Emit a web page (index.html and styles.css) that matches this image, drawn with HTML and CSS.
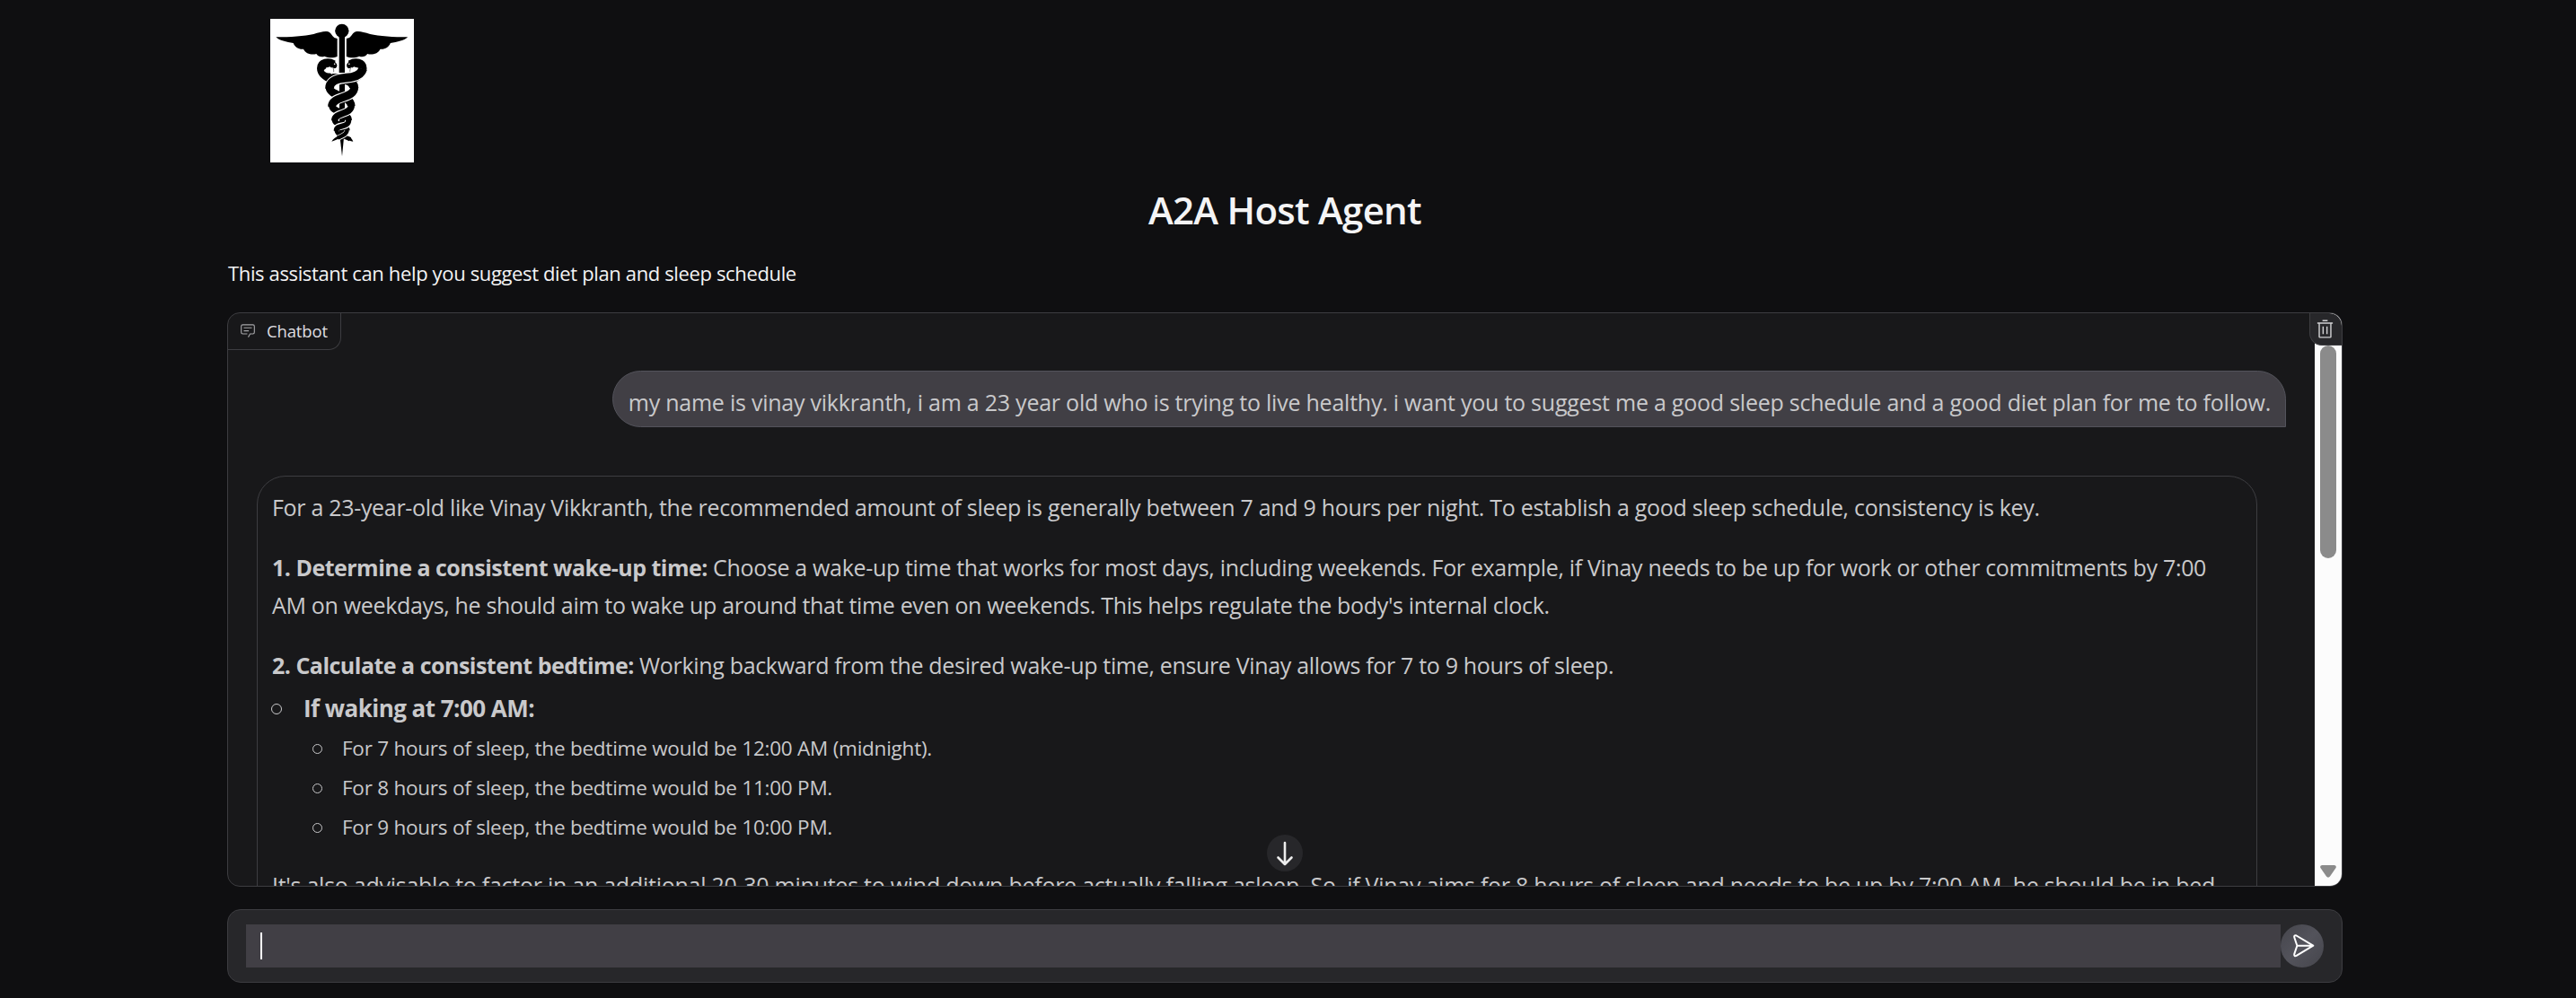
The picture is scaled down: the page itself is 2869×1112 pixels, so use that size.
FILE: index.html
```html
<!DOCTYPE html>
<html lang="en">
<head>
<meta charset="utf-8">
<title>A2A Host Agent</title>
<link rel="stylesheet" href="styles.css">
</head>
<body>
<main class="app">
  <div class="logo">
    <svg viewBox="33 33 480 480" width="160" height="160" fill="none">
      <g fill="#000">
        <g id="wing">
          <path d="M52 94C100 94 148 91 178 84C198 78 214 73 226 76C236 79 239 90 247 96L257 99V159C246 164 229 165 214 158C204 162 193 159 187 150C172 155 150 149 144 134C130 136 115 128 110 114C88 111 62 105 52 94Z"/>
        </g>
        <use href="#wing" transform="matrix(-1 0 0 1 544.500 0)"/>
        <circle cx="272.500" cy="73" r="23"/>
        <path d="M263 88H282V213H263Z"/>
        <path d="M264 245H282V425H264Z"/>
        <path d="M266 430H279L273 492Z"/>
      </g>
      <g id="head">
        <path d="M244 186C226 176 204 180 204 198C204 216 222 226 240 236" stroke="#000" stroke-width="30"/>
        <path d="M226 171C240 170 254 177 256 187C257 195 252 200 246 198C240 194 232 194 226 198Z" fill="#000"/>
        <path d="M232 193C224 196 214 201 212 206C218 214 228 216 241 214V199" fill="#fff"/>
        <circle cx="248" cy="184" r="2.500" fill="#fff"/>
        <path d="M243 197L245 204V211" stroke="#000" stroke-width="1.500"/>
      </g>
      <use href="#head" transform="matrix(-1 0 0 1 544.500 0)"/>
      <g stroke="#000">
        <path d="M240 231C285 232 313 240 313 266" stroke-width="30"/>
        <path d="M231 262C231 292 304 288 304 326" stroke-width="26"/>
        <path d="M239 322C239 347 295 342 295 374" stroke-width="22"/>
        <path d="M248 369C248 392 290 384 290 407" stroke-width="18"/>
        <path d="M254 403C254 423 280 424 300 436" stroke-width="14"/>
      </g>
      <path d="M296 427C303 431 307 436 310 443C300 442 289 438 283 430Z" fill="#000"/>
      <g stroke="#fff">
        <path d="M342 202C336 222 312 228 288 230C252 233 233 242 232 264" stroke-width="36"/>
        <path d="M314 264C314 301 239 290 239 324" stroke-width="33"/>
        <path d="M304 324C304 354 248 344 248 371" stroke-width="28"/>
        <path d="M295 372C295 400 254 384 254 405" stroke-width="24"/>
        <path d="M290 405C290 422 268 426 248 436" stroke-width="18"/>
      </g>
      <g stroke="#000">
        <path d="M342 200C336 222 312 228 288 230C252 233 231 242 231 266" stroke-width="29"/>
        <path d="M314 262C314 301 239 290 239 326" stroke-width="27"/>
        <path d="M304 322C304 354 248 344 248 373" stroke-width="22"/>
        <path d="M295 370C295 400 254 384 254 407" stroke-width="18"/>
        <path d="M290 403C290 420 272 424 258 431" stroke-width="13"/>
      </g>
      <path d="M238 443C243 434 253 428 264 423L268 431C258 434 249 440 238 443Z" fill="#000"/>
    </svg>
  </div>
  <h1 class="title">A2A Host Agent</h1>
  <p class="description">This assistant can help you suggest diet plan and sleep schedule</p>

  <section class="chat">
    <div class="messages">
      <div class="bubble user">my name is vinay vikkranth, i am a 23 year old who is trying to live healthy. i want you to suggest me a good sleep schedule and a good diet plan for me to follow.</div>
      <div class="bubble bot">
        <p class="intro">For a 23-year-old like Vinay Vikkranth, the recommended amount of sleep is generally between 7 and 9 hours per night. To establish a good sleep schedule, consistency is key.</p>
        <p><strong>1. Determine a consistent wake-up time:</strong> Choose a wake-up time that works for most days, including weekends. For example, if Vinay needs to be up for work or other commitments by 7:00<br>AM on weekdays, he should aim to wake up around that time even on weekends. This helps regulate the body's internal clock.</p>
        <p class="lead-in"><strong>2. Calculate a consistent bedtime:</strong> Working backward from the desired wake-up time, ensure Vinay allows for 7 to 9 hours of sleep.</p>
        <ul class="list">
          <li><strong class="item-title">If waking at 7:00 AM:</strong>
            <ul class="sublist">
              <li>For 7 hours of sleep, the bedtime would be 12:00 AM (midnight).</li>
              <li>For 8 hours of sleep, the bedtime would be 11:00 PM.</li>
              <li>For 9 hours of sleep, the bedtime would be 10:00 PM.</li>
            </ul>
          </li>
        </ul>
        <p class="closing">It's also advisable to factor in an additional 20-30 minutes to wind down before actually falling asleep. So, if Vinay aims for 8 hours of sleep and needs to be up by 7:00 AM, he should be in bed</p>
      </div>
    </div>
    <div class="scrollbar">
      <div class="thumb"></div>
      <svg class="arrow" width="18" height="14" viewBox="0 0 18 14"><path d="M2.500 0H15.500C17.500 0 18.500 1.800 17.400 3.300L11 12.500C10 14 8 14 7 12.500L.6 3.300C-.5 1.800 .5 0 2.500 0Z" fill="#8b8b8b"/></svg>
    </div>
    <div class="label">
      <svg width="18" height="18" viewBox="0 0 32 32" fill="#a5a5a8"><path d="M17.740 30L16 29l4-7h6a2 2 0 0 0 2-2V8a2 2 0 0 0-2-2H6a2 2 0 0 0-2 2v12a2 2 0 0 0 2 2h9v2H6a4 4 0 0 1-4-4V8a4 4 0 0 1 4-4h20a4 4 0 0 1 4 4v12a4 4 0 0 1-4 4h-4.840Z"/><path d="M8 10h16v2H8zM8 16h10v2H8z"/></svg>
      <span>Chatbot</span>
    </div>
    <button class="clear" aria-label="Clear">
      <svg width="23" height="23" viewBox="0 0 32 32" fill="#d0d0d2"><path d="M12 12h2v12h-2zM18 12h2v12h-2zM4 6v2h2v20a2 2 0 0 0 2 2h16a2 2 0 0 0 2-2V8h2V6zm4 22V8h16v20zM12 2h8v2h-8z"/></svg>
    </button>
    <button class="to-bottom" aria-label="Scroll to bottom">
      <svg width="20" height="28" viewBox="0 0 20 28" fill="none" stroke="#ececec" stroke-width="2.600" stroke-linecap="round" stroke-linejoin="round"><path d="M10 2V26M2.500 18.500L10 26L17.500 18.500"/></svg>
    </button>
  </section>

  <form class="composer">
    <div class="field"><span class="caret"></span></div>
    <button class="send" type="button" aria-label="Send">
      <svg width="26" height="28" viewBox="0 0 26 28" fill="none" stroke="#fff" stroke-width="2" stroke-linejoin="round" stroke-linecap="round"><path d="M2.300 4.500C1.700 2.700 3 1.700 4.600 2.500L23.300 13.700L4.600 24.900C3 25.700 1.700 24.700 2.300 22.900L5.400 13.700ZM5.400 13.700H22"/></svg>
    </button>
  </form>
</main>
</body>
</html>
```
FILE: styles.css
```css
* {
  box-sizing: border-box;
}

body {
  margin: 0;
  height: 1112px;
  overflow: hidden;
  background: #0f0f11;
  font-family: "Open Sans", "Noto Sans", sans-serif;
}

button {
  padding: 0;
  border: 0;
}

svg {
  display: block;
}

.app {
  width: 2356px;
  margin-left: 253px;
  padding-top: 21px;
}

.logo {
  width: 160px;
  height: 160px;
  margin-left: 48px;
  background: #fff;
}

.title {
  height: 56px;
  margin: 25px 0 0;
  color: #f4f4f5;
  font-size: 42px;
  font-weight: 600;
  line-height: 56px;
  letter-spacing: -0.73px;
  text-align: center;
}

.description {
  height: 30px;
  margin: 27px 0 29px;
  padding-left: 1px;
  color: #f4f4f5;
  font-size: 22px;
  line-height: 30px;
  letter-spacing: -0.36px;
}

.chat {
  position: relative;
  display: flex;
  height: 640px;
  overflow: hidden;
  background: #18181a;
  border: 1px solid #3d3d41;
  border-radius: 14px;
}

.messages {
  flex: 1;
  display: flex;
  flex-direction: column;
  padding: 64px 32px 0;
  color: #c9c9cb;
  font-size: 25px;
  line-height: 42.300px;
  letter-spacing: -0.33px;
  white-space: nowrap;
}

.bubble {
  flex: none;
  border: 1px solid #3d3d41;
}

.user {
  align-self: flex-end;
  height: 63px;
  padding: 13px 16px 0 17px;
  background: #413f45;
  border-color: #53535b;
  border-radius: 32px 32px 0 32px;
  letter-spacing: -0.236px;
}

.bot {
  width: 2228px;
  height: 520px;
  margin-top: 54px;
  padding: 13px 16px 0;
  border-radius: 32px 32px 0 0;
}

.bot p {
  margin: 0 0 24.600px;
}

.bot p.intro {
  letter-spacing: -0.31px;
}

.bot p.lead-in {
  margin-bottom: 6px;
}

.bot p.closing {
  margin-top: 21px;
  letter-spacing: -0.26px;
}

strong {
  font-weight: 700;
  letter-spacing: -0.51px;
}

ul {
  margin: 0;
  padding: 0;
  list-style: none;
}

.list > li {
  position: relative;
  padding-left: 35px;
}

.item-title {
  display: block;
  font-size: 26px;
  letter-spacing: -0.54px;
}

.list > li::before,
.sublist li::before {
  content: "";
  position: absolute;
  border: 1px solid #c9c9cb;
  border-radius: 50%;
}

.list > li::before {
  left: -1px;
  top: 16px;
  width: 10px;
  height: 10px;
}

.sublist {
  padding-top: 1px;
}

.sublist li {
  position: relative;
  padding-left: 43px;
  font-size: 22.500px;
  line-height: 44px;
  letter-spacing: -0.24px;
}

.sublist li::before {
  left: 10px;
  top: 17px;
  width: 9px;
  height: 9px;
}

.scrollbar {
  flex: none;
  display: flex;
  flex-direction: column;
  justify-content: space-between;
  align-items: center;
  width: 30px;
  padding: 36px 0 9px;
  background: #fcfcfc;
}

.thumb {
  width: 18px;
  height: 237px;
  background: #8b8b8b;
  border-radius: 9px;
}

.label {
  position: absolute;
  left: 0;
  top: 0;
  display: flex;
  align-items: center;
  gap: 12px;
  width: 126px;
  height: 41px;
  padding: 0 0 2px 13px;
  border: solid #3d3d41;
  border-width: 0 1px 1px 0;
  border-radius: 0 0 14px 0;
  color: #dfdfe1;
  font-size: 18.500px;
  letter-spacing: -0.14px;
}

.clear {
  position: absolute;
  right: 0;
  top: 0;
  display: grid;
  place-items: center;
  width: 36px;
  height: 36px;
  padding-right: 2px;
  background: #27272a;
  border: solid #3d3d41;
  border-width: 0 0 1px 1px;
  border-radius: 0 14px 0 14px;
}

.to-bottom {
  position: absolute;
  left: 1157px;
  bottom: 16px;
  display: grid;
  place-items: center;
  width: 40px;
  height: 41px;
  background: #27272a;
  border-radius: 50%;
}

.composer {
  display: flex;
  align-items: center;
  height: 82px;
  margin-top: 25px;
  padding: 0 20px;
  background: #27272a;
  border: 1px solid #3d3d41;
  border-radius: 15px;
}

.field {
  flex: 1;
  display: flex;
  align-items: center;
  height: 48px;
  padding-left: 16px;
  background: #413f45;
}

.caret {
  width: 2px;
  height: 30px;
  background: #fff;
}

.send {
  display: grid;
  place-items: center;
  width: 48px;
  height: 48px;
  padding-left: 4px;
  background: linear-gradient(135deg, #45454c, #53535b 50%, #45454c);
  border-radius: 50%;
}
```
